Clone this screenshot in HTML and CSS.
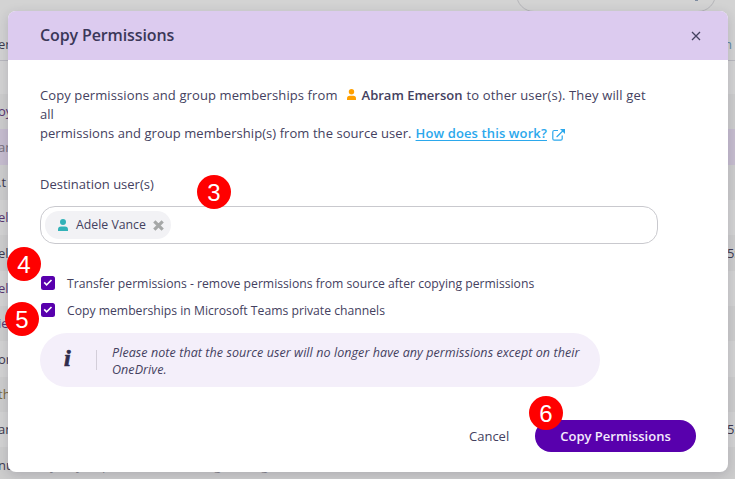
FILE: index.html
```html
<!DOCTYPE html>
<html lang="en">
<head>
<meta charset="utf-8">
<title>Copy Permissions</title>
<link rel="stylesheet" href="styles.css">
</head>
<body>
<div class="page">
  <div class="toolbar"><div class="search"><span class="search-mark"></span></div></div>
  <div class="row head"><span>ern</span><span class="end link">n</span></div>
  <div class="row spacer"></div>
  <div class="row odd"><span class="purple">oy</span></div>
  <div class="row selected"><span class="gray">ar</span></div>
  <div class="row odd"><span>.t</span></div>
  <div class="row"><span class="purple">ela</span></div>
  <div class="row odd"><span>ele</span><span class="end">5:</span></div>
  <div class="row"><span class="purple">ell</span></div>
  <div class="row odd"><span class="purple">ie</span></div>
  <div class="row"><span>or</span></div>
  <div class="row odd"><span class="brown">th</span></div>
  <div class="row"><span>an</span><span class="end">5:</span></div>
  <div class="row odd last"><span class="first">nu.</span><span class="tails"><i>y</i><i>y</i><i>p</i><i>g</i><i>g</i></span></div>
</div>

<section class="dialog" role="dialog" aria-label="Copy Permissions">
  <header class="dialog-head">
    <h1>Copy Permissions</h1>
    <svg class="close" viewBox="0 0 10 10"><path d="M1 1l8 8M9 1l-8 8"/></svg>
  </header>
  <div class="dialog-body">
    <div class="intro">
      <div class="line"><span class="t-from">Copy permissions and group memberships from</span><svg class="person source" viewBox="0 0 10 12"><circle cx="5" cy="3" r="3"/><path d="M0 12V10.4Q0 7.4 3 7.4H7Q10 7.4 10 10.4V12z"/></svg><b class="t-name">Abram Emerson</b><span class="t-they">to other user(s). They will get</span></div>
      <div class="line"><span>all</span></div>
      <div class="line"><span class="t-perm">permissions and group membership(s) from the source user.</span><a class="help">How does this work?</a><svg class="external" viewBox="0 0 13 12"><path d="M6 1.5H2.3Q.8 1.500 .8 3V9.700Q.8 11.200 2.300 11.200H8.700Q10.200 11.200 10.200 9.700V6.500M4.600 8L11 1.800"/><path class="tip" d="M8 0h5v5z"/></svg></div>
    </div>
    <div class="label"><span>Destination user(s)</span></div>
    <div class="field">
      <div class="chip"><svg class="person target" viewBox="0 0 10 12"><circle cx="5" cy="3" r="3"/><path d="M0 12V10.400Q0 7.400 3 7.400H7Q10 7.400 10 10.400V12z"/></svg><span>Adele Vance</span><svg class="remove" viewBox="0 0 10 10"><path d="M1.200 1.200l7.600 7.600M8.800 1.200l-7.600 7.600"/></svg></div>
    </div>
    <div class="check first-check"><svg class="box" viewBox="0 0 14 14"><rect width="14" height="14" rx="2.500"/><path d="M3.200 6.400l2.400 2.500L10.500 4"/></svg><span class="t-transfer">Transfer permissions - remove permissions from source after copying permissions</span></div>
    <div class="check"><svg class="box" viewBox="0 0 14 14"><rect width="14" height="14" rx="2.500"/><path d="M3.200 6.400l2.400 2.500L10.500 4"/></svg><span class="t-teams">Copy memberships in Microsoft Teams private channels</span></div>
    <div class="note">
      <span class="info">i</span>
      <p><span>Please note that the source user will no longer have any permissions except on their</span><br><span>OneDrive.</span></p>
    </div>
    <footer class="actions">
      <span class="cancel">Cancel</span>
      <span class="submit">Copy Permissions</span>
    </footer>
  </div>
</section>

<span class="badge b3">3</span>
<span class="badge b4">4</span>
<span class="badge b5">5</span>
<span class="badge b6">6</span>
</body>
</html>
```
FILE: styles.css
```css
* { box-sizing: border-box; }
body {
  margin: 0;
  width: 735px;
  height: 479px;
  overflow: hidden;
  position: relative;
  background: #d3d3d3;
  color: #444160;
  font: 13px/19px "Open Sans", "Noto Sans", sans-serif;
}
svg { flex: none; fill: none; }
span, b, a { white-space: nowrap; }

.page { height: 479px; overflow: hidden; }
.toolbar { height: 29px; overflow: hidden; }
.search {
  width: 200px;
  height: 36px;
  margin: -24px 0 0 516px;
  border: 1px solid #b5b5b9;
  border-radius: 18px;
  display: flex;
  justify-content: flex-end;
  align-items: flex-end;
  padding: 0 17px 10px;
}
.search-mark { width: 3px; height: 2px; background: #7e8ca0; }
.row {
  height: 35.35px;
  display: flex;
  align-items: center;
  justify-content: space-between;
  background: #d3d3d3;
  color: #3d3a50;
}
.row span:first-child { margin-left: -2px; }
.row .end { width: 8px; letter-spacing: -.5px; }
.row .link { color: #5b87a3; width: 9px; margin-right: 2px; }
.head { height: 32px; border-bottom: 1px solid #b8b8be; }
.spacer { height: 33px; }
.odd { background: #cdcdcd; }
.selected { background: #c6bdcf; }
.purple { color: #58346f; }
.gray { color: #77717c; }
.brown { color: #78683d; }
.last { justify-content: flex-start; }
.last .first { width: 52px; }
.tails { display: flex; color: #85858c; }
.tails i { font-style: normal; width: 26px; }
.tails i:nth-child(3) { width: 112px; }
.tails i:nth-child(4) { width: 47px; }

.dialog {
  position: absolute;
  left: 8px;
  top: 11px;
  width: 720px;
  height: 461px;
  border-radius: 8px;
  overflow: hidden;
  background: #fff;
  box-shadow: 0 3px 12px rgba(40, 35, 60, .18);
}
.dialog-head {
  height: 49px;
  padding: 0 28px 0 32px;
  background: #dccbef;
  display: flex;
  align-items: center;
  justify-content: space-between;
}
h1 { margin: 0 0 2px; color: #3a3758; font: 600 16px/22px "Open Sans", sans-serif; letter-spacing: -.12px; }
.close { width: 10px; height: 10px; margin: 0 -1px 0 auto; stroke: #444160; stroke-width: 1.3; }
.dialog-body { padding: 26px 32px 0; }
.line { height: 19px; display: flex; align-items: center; }
.t-from { letter-spacing: .1px; }
.t-they { letter-spacing: .16px; }
.t-perm { letter-spacing: .06px; }
.person { width: 9px; height: 11px; }
.source { fill: #ffa000; margin: 0 6px 2px 9px; }
.t-name { font-weight: 600; margin-right: 4px; }
.help { margin-left: 4px; font-weight: 600; letter-spacing: .12px; color: #2ba8ec; text-decoration: underline; text-underline-offset: 2px; text-decoration-skip-ink: none; }
.external { width: 13px; height: 12px; margin: 2px 0 0 5px; stroke: #2ba8ec; stroke-width: 1.2; }
.external .tip { fill: #2ba8ec; stroke: none; }
.label { margin-top: 32px; height: 19px; }
.field {
  margin-top: 12px;
  width: 618px;
  height: 38px;
  padding: 4px;
  border: 1px solid #c9c9ce;
  border-radius: 15px;
}
.chip {
  width: 126px;
  height: 28px;
  padding-left: 13px;
  border-radius: 14px;
  background: #f2f2f5;
  display: flex;
  align-items: center;
  font-size: 12.3px;
}
.chip span { margin-bottom: 1px; }
.target { width: 10px; height: 12px; fill: #32b2b8; margin-right: 8px; margin-bottom: 1px; }
.remove { width: 11px; height: 11px; margin: 1px 0 0 7px; stroke: #a5a7a7; stroke-width: 2.9; }
.check { height: 27px; display: flex; align-items: center; font-size: 12.2px; }
.first-check { margin-top: 26px; }
.box { width: 14px; height: 14px; margin: 0 12px 1px 1px; fill: #5800ad; }
.box path { fill: none; stroke: #fff; stroke-width: 1.6; }
.note {
  margin-top: 9px;
  width: 560px;
  height: 54px;
  border-radius: 27px;
  background: #f4effa;
  display: flex;
  align-items: center;
}
.info {
  width: 57px;
  height: 20px;
  padding-left: 24px;
  border-right: 1px solid #d3ced9;
  color: #2f2c4c;
  font: italic bold 24px/17px "Liberation Serif", serif;
  -webkit-text-stroke: .7px #2f2c4c;
}
.note p { margin: 1px 0 0 15px; font: italic 12.5px/17px "Open Sans", sans-serif; letter-spacing: .08px; }
.actions { margin-top: 33px; height: 32px; display: flex; align-items: center; }
.cancel { margin-left: 429px; width: 66px; }
.submit {
  width: 161px;
  height: 32px;
  border-radius: 16px;
  background: #5800ad;
  color: #f4eafd;
  font-weight: 600;
  line-height: 32px;
  text-align: center;
}
.badge {
  position: absolute;
  width: 34px;
  height: 34px;
  border-radius: 50%;
  background: #f00;
  color: #fff;
  font: 24px/35px "Liberation Sans", sans-serif;
  text-align: center;
}
.b3 { left: 197px; top: 175px; }
.b4 { left: 7px; top: 247px; }
.b5 { left: 5px; top: 302px; }
.b6 { left: 529px; top: 396px; }
```
